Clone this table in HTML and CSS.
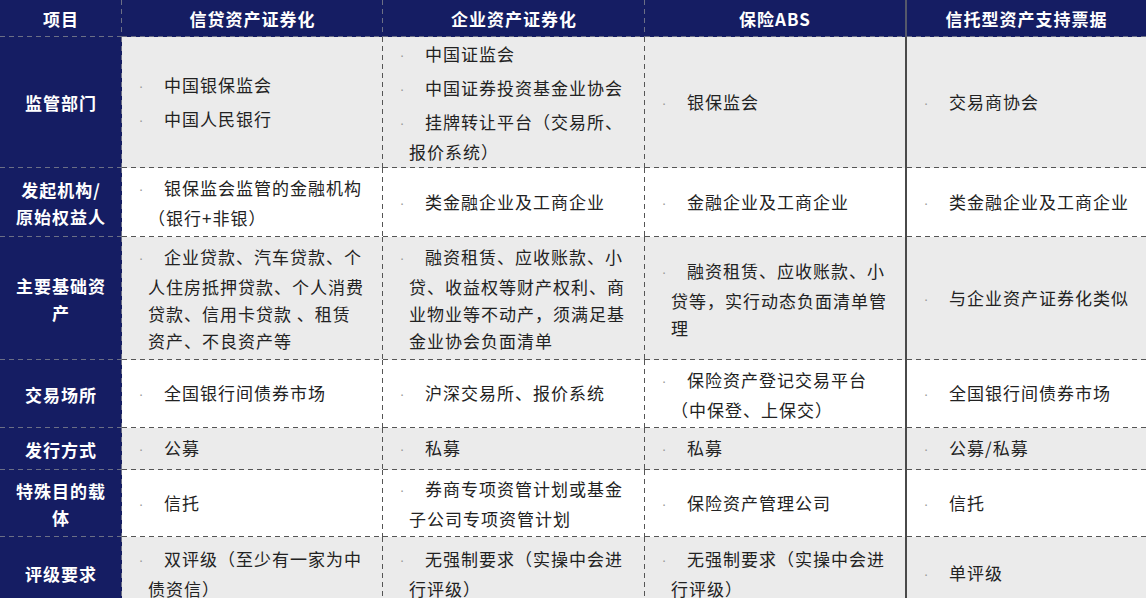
FILE: index.html
```html
<!DOCTYPE html>
<html lang="zh-CN">
<head>
<meta charset="utf-8">
<title>资产证券化对比</title>
<link rel="stylesheet" href="styles.css">
</head>
<body>
<div class="grid">
  <div class="hd">项目</div>
  <div class="hd">信贷资产证券化</div>
  <div class="hd">企业资产证券化</div>
  <div class="hd c4">保险ABS</div>
  <div class="hd c5">信托型资产支持票据</div>

  <div class="lbl">监管部门</div>
  <div class="cell g"><p><span class="dot">·</span>中国银保监会</p><p><span class="dot">·</span>中国人民银行</p></div>
  <div class="cell g"><p><span class="dot">·</span>中国证监会</p><p><span class="dot">·</span>中国证券投资基金业协会</p><p><span class="dot">·</span>挂牌转让平台（交易所、报价系统）</p></div>
  <div class="cell g c4"><p><span class="dot">·</span>银保监会</p></div>
  <div class="cell g c5"><p><span class="dot">·</span>交易商协会</p></div>

  <div class="lbl">发起机构/原始权益人</div>
  <div class="cell"><p><span class="dot">·</span>银保监会监管的金融机构（银行+非银）</p></div>
  <div class="cell"><p><span class="dot">·</span>类金融企业及工商企业</p></div>
  <div class="cell c4"><p><span class="dot">·</span>金融企业及工商企业</p></div>
  <div class="cell c5"><p><span class="dot">·</span>类金融企业及工商企业</p></div>

  <div class="lbl">主要基础资产</div>
  <div class="cell g"><p><span class="dot">·</span>企业贷款、汽车贷款、个人住房抵押贷款、个人消费贷款、信用卡贷款 、租赁资产、不良资产等</p></div>
  <div class="cell g"><p><span class="dot">·</span>融资租赁、应收账款、小贷、收益权等财产权利、商业物业等不动产，须满足基金业协会负面清单</p></div>
  <div class="cell g c4"><p><span class="dot">·</span>融资租赁、应收账款、小贷等，实行动态负面清单管理</p></div>
  <div class="cell g c5"><p><span class="dot">·</span>与企业资产证券化类似</p></div>

  <div class="lbl">交易场所</div>
  <div class="cell"><p><span class="dot">·</span>全国银行间债券市场</p></div>
  <div class="cell"><p><span class="dot">·</span>沪深交易所、报价系统</p></div>
  <div class="cell c4"><p><span class="dot">·</span>保险资产登记交易平台（中保登、上保交）</p></div>
  <div class="cell c5"><p><span class="dot">·</span>全国银行间债券市场</p></div>

  <div class="lbl">发行方式</div>
  <div class="cell g"><p><span class="dot">·</span>公募</p></div>
  <div class="cell g"><p><span class="dot">·</span>私募</p></div>
  <div class="cell g c4"><p><span class="dot">·</span>私募</p></div>
  <div class="cell g c5"><p><span class="dot">·</span>公募/私募</p></div>

  <div class="lbl">特殊目的载体</div>
  <div class="cell"><p><span class="dot">·</span>信托</p></div>
  <div class="cell"><p><span class="dot">·</span>券商专项资管计划或基金子公司专项资管计划</p></div>
  <div class="cell c4"><p><span class="dot">·</span>保险资产管理公司</p></div>
  <div class="cell c5"><p><span class="dot">·</span>信托</p></div>

  <div class="lbl">评级要求</div>
  <div class="cell g"><p><span class="dot">·</span>双评级（至少有一家为中债资信）</p></div>
  <div class="cell g"><p><span class="dot">·</span>无强制要求（实操中会进行评级）</p></div>
  <div class="cell g c4"><p><span class="dot">·</span>无强制要求（实操中会进行评级）</p></div>
  <div class="cell g c5"><p><span class="dot">·</span>单评级</p></div>
</div>
</body>
</html>
```

FILE: styles.css
```css
html, body {
  margin: 0;
  padding: 0;
  background: #ffffff;
  overflow: hidden;
}

body {
  width: 1146px;
  height: 598px;
  font-family: "Noto Sans CJK SC", "Noto Sans", sans-serif;
}

.grid {
  display: grid;
  grid-template-columns: 122px 261px 262px 262px 239px;
  grid-template-rows: 37px 131px 69px 123px 68px 42px 67px 73px;
}

.grid > div {
  --ln: #555555;
  --bg: #ffffff;
  box-sizing: border-box;
  background:
    repeating-linear-gradient(90deg, var(--ln) 0 5px, transparent 5px 9px) left bottom / 100% 1px no-repeat,
    repeating-linear-gradient(180deg, var(--ln) 0 5px, transparent 5px 9px) right top / 1px 100% no-repeat,
    var(--bg);
}

.grid > .hd,
.grid > .lbl {
  --bg: #151d63;
  --ln: #6b6f86;
  color: #ffffff;
  font-weight: 700;
  font-size: 17px;
  letter-spacing: 1px;
  line-height: 27px;
  display: flex;
  align-items: center;
  justify-content: center;
  text-align: center;
}

.grid > .lbl {
  padding: 0 14px;
}

.grid > .c4 {
  background:
    repeating-linear-gradient(90deg, var(--ln) 0 5px, transparent 5px 9px) left bottom / 100% 1px no-repeat,
    var(--bg);
  border-right: 2px solid #4a4a4a;
}

.grid > .c5 {
  background:
    repeating-linear-gradient(90deg, var(--ln) 0 5px, transparent 5px 9px) left bottom / 100% 1px no-repeat,
    var(--bg);
}

.grid > .hd.c4 {
  border-right-color: #55586a;
}

.grid > .cell {
  display: flex;
  flex-direction: column;
  justify-content: center;
  padding: 0 16px 0 26px;
  color: #222222;
  font-size: 17px;
  letter-spacing: 1px;
  line-height: 27px;
}

.grid > .cell.g {
  --bg: #ebebeb;
}

.cell p {
  margin: 2px 0;
  text-indent: -9px;
}

.dot {
  display: inline-block;
  width: 25px;
  text-indent: 0;
  color: #9a9a9a;
  font-family: "DejaVu Sans", sans-serif;
  font-size: 13px;
  letter-spacing: 0;
}
```
